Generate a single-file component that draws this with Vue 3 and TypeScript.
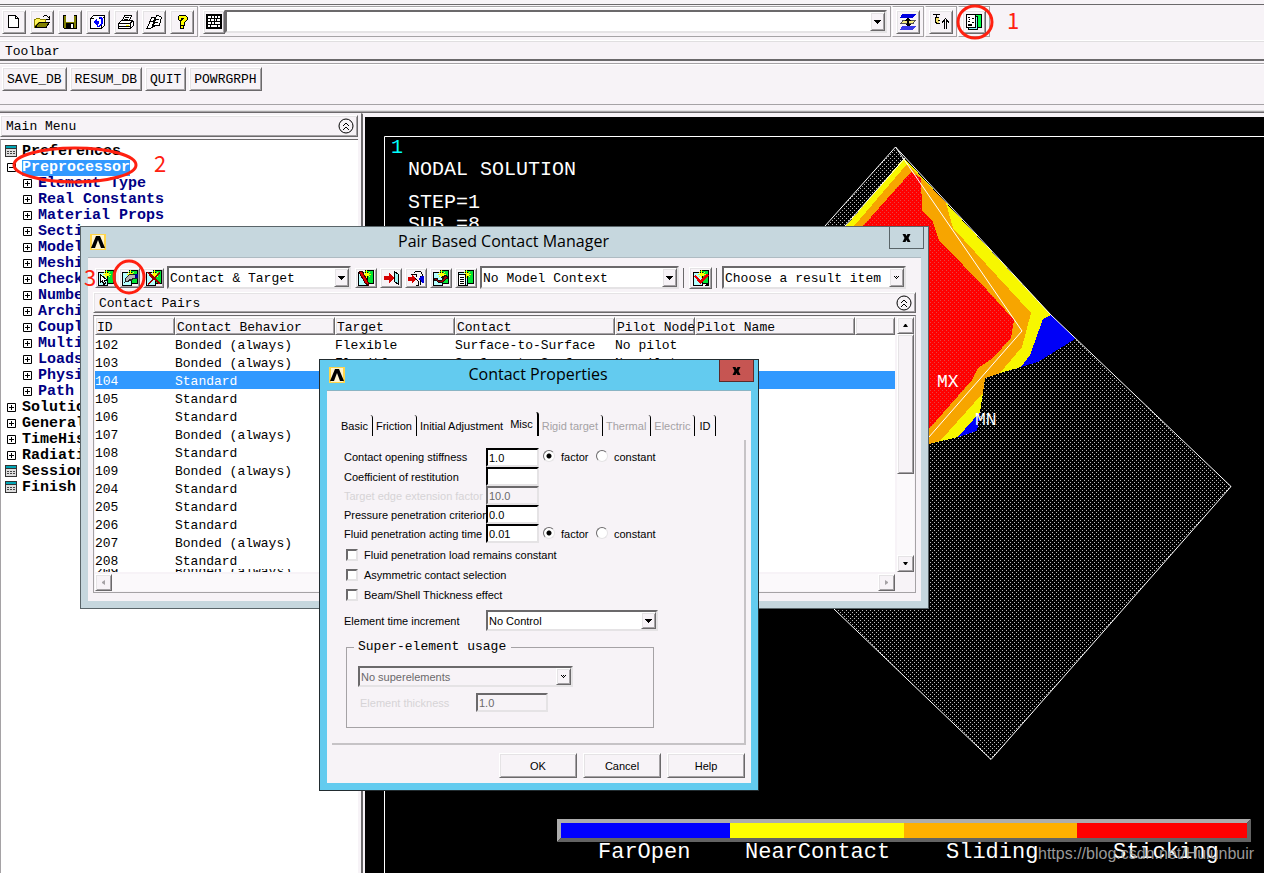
<script setup lang="ts">
import { ref } from 'vue'

type Shape = { d: string; f?: string; s?: string }

const pages: Shape[] = [
  { d: 'M7 0h9v14h-9z', f: '#000' },
  { d: 'M7 1h8v12h-8z', f: '#00e432' },
  { d: 'M0 2h10v14h-10z', f: '#000' },
  { d: 'M1 3h8v12h-8z', f: '#b5ffff' },
]
const spark: Shape = { d: 'M8.5 0v8M5 4.5h8M6 2l6 5M12 2l-6 5', s: '#ffff00' }

const icons: Record<string, Shape[]> = {
  new: [
    { d: 'M2.5 1.5h7l3 3v9h-10z', f: '#fff', s: '#000' },
    { d: 'M9.5 1.5v3h3', s: '#000' },
  ],
  open: [
    { d: 'M.5 13.5v-8h1l1-1h3l1 1h5v3h-7z', f: '#fff45a', s: '#8a8200' },
    { d: 'M1 14l4-6h11l-4 6z', f: '#808000' },
    { d: 'M1 13.5h11l3.5-5h-10l-4.5 5', s: '#000' },
    { d: 'M8.5 3.5l2-2h2l3 3M15.5 1.5v3.5h-3.5', s: '#000' },
  ],
  save: [
    { d: 'M1 1h14v14h-13l-1-1z', f: '#000' },
    { d: 'M2 2h2v6h8v-6h2v12h-12z', f: '#808000' },
    { d: 'M4 1h8v7h-8z', f: '#f7f3f7' },
    { d: 'M4 9h8v6h-8z', f: '#000' },
    { d: 'M9 10h2v4h-2z', f: '#fff' },
  ],
  restore: [
    { d: 'M.5 4.5l3-3h11v10l-3 3h-11z', f: '#fff', s: '#000' },
    { d: 'M.5 4.5h3M11.5 14.5v-9l3-3M9 4.5h2', s: '#000' },
    { d: 'M3 8l4-4v3h1c2 0 2 2 0 5h-2c5 0 6-3 5-6s-2-3-4-3h4c2 1 3 3 2 6s-3 4-6 4c2-2 2-3 1-3v2z', f: '#0000ff' },
  ],
  print: [
    { d: 'M4.5 6.5l2-5h7l-2 5z', f: '#fff', s: '#000' },
    { d: 'M7 3.5h4M6 5.5h4', s: '#000' },
    { d: 'M.5 9.5l3-3h11l1 1v4l-3 3h-12z', f: '#fff', s: '#000' },
    { d: 'M1 9.5h11l3-3M12.5 10v4M1 12.5h11', s: '#000' },
    { d: 'M8 11h3v1h-3z', f: '#ffff00' },
  ],
  report: [
    { d: 'M2.5 11.5l3-8h3l-2 9-2 2h-4l2-3z', f: '#fff', s: '#000' },
    { d: 'M7.5 11.5l3-10h2l3 2-2 8z', f: '#fff', s: '#000' },
    { d: 'M10 5.5h3M9 8.5h3M4 7.5h3M6 13.5l4-2', s: '#000' },
  ],
  help: [
    { d: 'M4 5V3l2-2h5l2 2v3l-3 3v2H6V8l3-3V4H7v2H5z', f: '#ffff00', s: '#000' },
    { d: 'M6.5 11.5h3v3h-3z', f: '#ffff00', s: '#000' },
  ],
  command: [
    { d: 'M0 0h16v15h-16z', f: '#000' },
    { d: 'M2 2h3v2h-3zM6 2h2v2h-2zM9 2h2v2h-2zM12 2h2v2h-2zM2 5h2v2h-2zM5 5h3v2h-3zM9 5h1v2h-1zM11 5h3v2h-3zM2 8h3v2h-3zM6 8h2v2h-2zM9 8h5v2h-5zM2 11h2v2h-2zM5 11h6v2h-6zM12 11h2v2h-2z', f: '#fff' },
  ],
  layers: [
    { d: 'M2 0h14l-3 4h-13z', f: '#0000e0' },
    { d: 'M3 6.5h12l-2 3h-12z', f: '#f7ee7a', s: '#555' },
    { d: 'M2 12h14l-3 4h-13z', f: '#3838e8' },
    { d: 'M7 4h2l2 3h-2v3h2l-2 2h-2l-2-2h2v-3h-2z', f: '#000' },
  ],
  raise: [
    { d: 'M3 4h3v5h-3z', f: '#f3e26b' },
    { d: 'M0 .5h7M3.5 1v2M6 3.5h-3l-1 1v3l2 2h3M5 6.5h2', s: '#000' },
    { d: 'M11.5 15v-9M13.5 15v-9M9 8.5l3.5-4 3.5 4', s: '#000' },
  ],
  pair: [
    { d: 'M9 0h7v14h-7z', f: '#000' },
    { d: 'M10 1h5v12h-5z', f: '#00ff42' },
    { d: 'M2 2h10v14h-10z', f: '#000' },
    { d: 'M3 3h8v12h-8z', f: '#8cf3ff' },
    { d: 'M.5 .5h9v13h-9z', f: '#fff', s: '#000' },
    { d: 'M2 3.5h2M3 5.5h1M6 4.5h2M2 7.5h2M6 8.5h2M2 10.5h4M2 11.5h4', s: '#000' },
  ],
  pick: [...pages, spark, { d: 'M2.5 4.5v8l2-2 1 4 2-1-1-3h3z', f: '#fff', s: '#000' }],
  props: [...pages, spark, { d: 'M4 8l4-4h7v4h-4l-2 3-1-2-2 3-1-1-2 1z', f: '#b5b5b5', s: '#222' }, { d: 'M13 4h3v4h-3z', f: '#000090' }],
  remove: [...pages, spark, { d: 'M1 2l3 1 4 4 5-5 1 1-5 5 5 5-1 1-5-4-6 5-1-1 5-5z', f: '#9c0000' }],
  draw: [...pages, spark, { d: 'M1 2l3-1 6 11v3l-3-2z', f: '#e00000', s: '#400' }],
  target: [
    { d: 'M11.5 1.5l4 3v10l-4-3z', f: '#9cf3f3', s: '#000' },
    { d: 'M1 6h5v-3l6 5-6 5v-3h-5z', f: '#d60000' },
  ],
  flip: [
    { d: 'M5.5 3.5l2-2h5l2 3v3M3 4.5h5v2M12 6l2.5 2 2-3', s: '#000' },
    { d: 'M0 7h4v-2l4 4-4 4v-2h-4z', f: '#d60000' },
    { d: 'M16 6h-2l-4 3 4 4h2z', f: '#0000e0' },
    { d: 'M7.5 8.5l3 3v4h-3M12.5 10v5', s: '#000' },
  ],
  swap: [...pages, spark, { d: 'M1 8h3l1 2h4l2-3h-1l3-2 2 3-2 1-3 3h-5l-2-2h-2z', f: '#a00000', s: '#111' }],
  list: [...pages, spark, { d: 'M.5 4.5h7v11h-7zM2 7.5h4M2 9.5h4M2 11.5h4M2 13.5h4', f: '#fff', s: '#000' }],
  check: [...pages, spark, { d: 'M1 6l2-1 4 5 7-6 2 1-9 9z', f: '#e80000' }, { d: 'M11 16l5-4v4z', f: '#000' }],
}

const fileTools = [
  ['new', 'New'], ['open', 'Open'], ['save', 'Save'], ['restore', 'Restore'],
  ['print', 'Print'], ['report', 'Report'], ['help', 'Help'],
]
const sideTools = [['layers', 'Raise hidden'], ['raise', 'Reset picking'], ['pair', 'Contact Manager']]
const shortcuts = ['SAVE_DB', 'RESUM_DB', 'QUIT', 'POWRGRPH']

const tree = [
  { t: 'Preferences', l: 0, k: 'form' },
  { t: 'Preprocessor', l: 0, k: 'minus', on: true },
  ...['Element Type', 'Real Constants', 'Material Props', 'Sections', 'Modeling', 'Meshing',
    'Checking Ctrls', 'Numbering Ctrls', 'Archive Model', 'Coupling / Ceqn', 'Multi-field',
    'Loads', 'Physics', 'Path Operations'].map((t) => ({ t, l: 1, k: 'plus', on: false })),
  ...['Solution', 'General Postproc', 'TimeHist Postpro', 'Radiation Opt'].map((t) => ({ t, l: 0, k: 'plus', on: false })),
  { t: 'Session Editor', l: 0, k: 'form' },
  { t: 'Finish', l: 0, k: 'form' },
]

const bonded = ['102', '103', '107', '109', '207', '209']
const ids = ['102', '103', '104', '105', '106', '107', '108', '109', '204', '205', '206', '207', '208', '209']
const rows = ids.map((id) => ({
  id,
  behavior: bonded.includes(id) ? 'Bonded (always)' : 'Standard',
}))
const headers = ['ID', 'Contact Behavior', 'Target', 'Contact', 'Pilot Node', 'Pilot Name', '']
const selected = ref('104')

const tabs = [
  { t: 'Basic' }, { t: 'Friction' }, { t: 'Initial Adjustment' }, { t: 'Misc', on: true },
  { t: 'Rigid target', off: true }, { t: 'Thermal', off: true }, { t: 'Electric', off: true }, { t: 'ID' },
]
const fields = ref([
  { id: 'stiff', t: 'Contact opening stiffness', v: '1.0', mode: 'factor' },
  { id: 'rest', t: 'Coefficient of restitution', v: '' },
  { id: 'edge', t: 'Target edge extension factor', v: '10.0', off: true },
  { id: 'pres', t: 'Pressure penetration criterion', v: '0.0' },
  { id: 'fluid', t: 'Fluid penetration acting time', v: '0.01', mode: 'factor' },
] as { id: string; t: string; v: string; off?: boolean; mode?: string }[])
const checks = ['Fluid penetration load remains constant', 'Asymmetric contact selection', 'Beam/Shell Thickness effect']

const legend = [
  { t: 'FarOpen', c: '#0000ff', x: 561, w: 169, tx: 598 },
  { t: 'NearContact', c: '#ffff00', x: 730, w: 174, tx: 745 },
  { t: 'Sliding', c: '#ffb000', x: 904, w: 173, tx: 946 },
  { t: 'Sticking', c: '#ff0000', x: 1077, w: 170, tx: 1113 },
]
</script>

<template>
  <div class="desk">
    <header class="bars">
      <div class="row tools">
        <div class="group files">
          <button v-for="[k, n] in fileTools" :key="k" class="tool" :aria-label="n">
            <svg class="ico" viewBox="0 0 16 16"><path v-for="(p, i) in icons[k]" :key="i" :d="p.d" :fill="p.f || 'none'" :stroke="p.s || 'none'" /></svg>
          </button>
        </div>
        <div class="group command">
          <button class="tool cmd" aria-label="Command window">
            <svg class="ico" viewBox="0 0 16 16"><path v-for="(p, i) in icons.command" :key="i" :d="p.d" :fill="p.f || 'none'" :stroke="p.s || 'none'" /></svg>
          </button>
          <div class="combo entry">
            <input type="text" aria-label="Command" />
            <button class="drop" aria-label="Command history"><svg viewBox="0 0 7 4"><path d="M0 0h7l-3 4h-1z" /></svg></button>
          </div>
        </div>
        <div v-for="[k, n] in sideTools" :key="k" class="group single">
          <button class="tool" :aria-label="n">
            <svg class="ico" viewBox="0 0 16 16"><path v-for="(p, i) in icons[k]" :key="i" :d="p.d" :fill="p.f || 'none'" :stroke="p.s || 'none'" /></svg>
          </button>
        </div>
      </div>
      <div class="caption">Toolbar</div>
      <div class="row shortcuts">
        <button v-for="s in shortcuts" :key="s" class="push">{{ s }}</button>
      </div>
    </header>

    <main class="work">
      <nav class="side">
        <div class="panel-head menu-head">
          <span>Main Menu</span>
          <button class="fold" aria-label="Collapse menu">
            <svg viewBox="0 0 16 16"><circle cx="8" cy="8" r="7" /><path d="M5 8l3-3 3 3M5 12l3-3 3 3" /></svg>
          </button>
        </div>
        <ul class="tree">
          <li v-for="n in tree" :key="n.t" :class="{ deep: n.l, plain: !n.l, on: n.on }">
            <svg v-if="n.k === 'form'" class="form" viewBox="0 0 12 12">
              <path d="M0 0h12v12h-12z" fill="#333" /><path d="M1 1h10v2h-10z" fill="#00a5b5" />
              <path d="M1 4h10v7h-10z" fill="#ddd" /><path d="M2 6.5h8M2 8.5h8" stroke="#444" stroke-dasharray="2 1" />
            </svg>
            <svg v-else class="node" viewBox="0 0 9 9">
              <path d="M.5.5h8v8h-8zM2 4.5h5" /><path v-if="n.k === 'plus'" d="M4.5 2v5" />
            </svg>
            <a href="#">{{ n.t }}</a>
          </li>
        </ul>
      </nav>

      <section class="plot">
        <svg viewBox="365 117 899 756" preserveAspectRatio="xMinYMin meet">
          <defs>
            <pattern id="mesh" width="4" height="4" patternUnits="userSpaceOnUse"><path d="M0 0h1v1h-1zM2 2h1v1h-1z" fill="#bdbdbd" /></pattern>
          </defs>
          <path class="line" d="M1264 136.5H384.5V873" />
          <g shape-rendering="crispEdges">
            <path d="M895 147L905 158L845 226H825zM1075 339L1231 486L991 760L834 609L929 444L985 378L1038 362z" fill="url(#mesh)" />
            <path d="M904 158L1051 315L1043 319L1030 355L1021 367L1000 373L985 378L983 393L980 412L958 437L929 444V226H846z" fill="#f7f700" />
            <path d="M907 164L946 203L953 228L1031 313L1022 347L1000 373L985 378L983 393L940 441L929 444V226H854z" fill="#f7a500" />
            <path d="M911 172L921 178L922 210L933 222L939 240L987 290L1014 320L1011 338L993 358L978 368L972 380L929 429V226H863z" fill="#f00" />
            <path d="M911 172L921 178L922 210L933 222L939 240L987 290L1014 320L1011 338L993 358L978 368L972 380L929 429V226H863z" fill="url(#mesh)" opacity=".35" />
            <path d="M1051 315L1075 339L1038 362L1021 367L1030 355L1043 319zM980 412L977 431L958 437z" fill="#0000f7" />
          </g>
          <path class="line" d="M825 226L895.5 147L1051 315L1231 486.5L991 759.5L834 609M905 158L845 226M895.5 147L1022 331L929 437" />
          <text class="t20 cyan" x="391" y="153">1</text>
          <text class="t20" x="408" y="175">NODAL SOLUTION</text>
          <text class="t20" x="408" y="208">STEP=1</text>
          <text class="t20" x="408" y="230">SUB =8</text>
          <text class="t18" x="937" y="387">MX</text>
          <text class="t18" x="975" y="425">MN</text>
          <path d="M557 819H1251L1247 823H561V838L557 842z" fill="#adadad" />
          <path d="M1251 819V842H557L561 838H1247V823z" fill="#636363" />
          <template v-for="s in legend" :key="s.t">
            <rect :x="s.x" y="823" :width="s.w" height="15" :fill="s.c" />
            <text class="t22" :x="s.tx" y="858">{{ s.t }}</text>
          </template>
          <text class="mark" x="1038" y="859">https://blog.csdn.net/Hulunbuir</text>
        </svg>
      </section>
    </main>

    <section class="window manager" aria-label="Pair Based Contact Manager">
      <div class="title">
        <svg class="logo" viewBox="0 0 16 16"><path d="M0 0h16v16h-16z" fill="#ffd54a" /><path d="M2 1h12v14h-12z" fill="#fff4cf" /><path d="M1 14L6 2h4l5 12h-4L8 6l-3 8z" fill="#000" /></svg>
        <h2>Pair Based Contact Manager</h2>
        <button class="close" aria-label="Close"><svg viewBox="0 0 8 8"><path d="M0 0h3l1 2 1-2h3l-2 4 2 4h-3l-1-2-1 2h-3l2-4z" /></svg></button>
      </div>
      <div class="body">
        <div class="row ctools">
          <button v-for="k in ['pick', 'props', 'remove']" :key="k" class="tool small" :aria-label="k">
            <svg class="ico" viewBox="0 0 16 16"><path v-for="(p, i) in icons[k]" :key="i" :d="p.d" :fill="p.f || 'none'" :stroke="p.s || 'none'" /></svg>
          </button>
          <div class="combo scope"><select aria-label="Show"><option>Contact &amp; Target</option></select><span class="drop"><svg viewBox="0 0 7 4"><path d="M0 0h7l-3 4h-1z" /></svg></span></div>
          <button v-for="k in ['draw', 'target', 'flip', 'swap', 'list']" :key="k" class="tool small mid" :aria-label="k">
            <svg class="ico" viewBox="0 0 16 16"><path v-for="(p, i) in icons[k]" :key="i" :d="p.d" :fill="p.f || 'none'" :stroke="p.s || 'none'" /></svg>
          </button>
          <div class="combo context"><select aria-label="Model context"><option>No Model Context</option></select><span class="drop"><svg viewBox="0 0 7 4"><path d="M0 0h7l-3 4h-1z" /></svg></span></div>
          <i class="sep"></i>
          <button class="tool small wide" aria-label="check"><svg class="ico" viewBox="0 0 16 16"><path v-for="(p, i) in icons.check" :key="i" :d="p.d" :fill="p.f || 'none'" :stroke="p.s || 'none'" /></svg></button>
          <i class="sep"></i>
          <div class="combo result"><select aria-label="Result item"><option>Choose a result item</option></select><span class="drop dim"><svg viewBox="0 0 5 4"><path d="M0 0h1v1h-1zM2 0h1v1h-1zM4 0h1v1h-1zM1 1h1v1h-1zM3 1h1v1h-1zM2 2h1v1h-1z" /></svg></span></div>
        </div>
        <div class="panel-head pairs-head">
          <span>Contact Pairs</span>
          <button class="fold" aria-label="Collapse pairs">
            <svg viewBox="0 0 16 16"><circle cx="8" cy="8" r="7" /><path d="M5 8l3-3 3 3M5 12l3-3 3 3" /></svg>
          </button>
        </div>
        <div class="grid">
          <div class="view">
            <table>
              <colgroup><col class="c1" /><col class="c2" /><col class="c3" /><col class="c2" /><col class="c1" /><col class="c2" /><col /></colgroup>
              <thead><tr><th v-for="h in headers" :key="h" scope="col"><div>{{ h }}</div></th></tr></thead>
              <tbody>
                <tr v-for="r in rows" :key="r.id" :class="{ sel: r.id === selected, cut: r.id === '209' }" @click="selected = r.id">
                  <td><div>{{ r.id }}</div></td><td><div>{{ r.behavior }}</div></td><td><div>Flexible</div></td>
                  <td><div>Surface-to-Surface</div></td><td colspan="3"><div>{{ Number(r.id) < 104 ? 'No pilot' : '' }}</div></td>
                </tr>
              </tbody>
            </table>
          </div>
          <div class="vbar">
            <button class="arrow" aria-label="Scroll up"><svg viewBox="0 0 5 3"><path d="M0 3h5l-2-3h-1z" /></svg></button>
            <div class="thumb"></div><div class="track"></div>
            <button class="arrow" aria-label="Scroll down"><svg viewBox="0 0 5 3"><path d="M0 0h5l-2 3h-1z" /></svg></button>
          </div>
          <div class="hbar">
            <button class="arrow" aria-label="Scroll left"><svg viewBox="0 0 3 5"><path d="M3 0v5l-3-2v-1z" /></svg></button>
            <div class="track"></div>
            <button class="arrow" aria-label="Scroll right"><svg viewBox="0 0 3 5"><path d="M0 0v5l3-2v-1z" /></svg></button>
          </div>
        </div>
      </div>
    </section>

    <section class="window props" aria-label="Contact Properties">
      <div class="title">
        <svg class="logo" viewBox="0 0 16 16"><path d="M0 0h16v16h-16z" fill="#ffd54a" /><path d="M2 1h12v14h-12z" fill="#fff4cf" /><path d="M1 14L6 2h4l5 12h-4L8 6l-3 8z" fill="#000" /></svg>
        <h2>Contact Properties</h2>
        <button class="close" aria-label="Close"><svg viewBox="0 0 8 8"><path d="M0 0h3l1 2 1-2h3l-2 4 2 4h-3l-1-2-1 2h-3l2-4z" /></svg></button>
      </div>
      <div class="body">
        <div class="tabs" role="tablist">
          <button v-for="t in tabs" :key="t.t" role="tab" :aria-selected="!!t.on" :disabled="t.off" :class="{ on: t.on }">{{ t.t }}</button>
        </div>
        <div class="page">
          <div v-for="f in fields" :key="f.id" class="field">
            <label :for="f.id" :class="{ off: f.off }">{{ f.t }}</label>
            <input :id="f.id" v-model="f.v" type="text" :disabled="f.off" />
            <template v-if="f.mode">
              <label v-for="m in ['factor', 'constant']" :key="m" class="radio"><input v-model="f.mode" type="radio" :name="f.id" :value="m" />{{ m }}</label>
            </template>
          </div>
          <div class="checks">
            <label v-for="c in checks" :key="c" class="check"><input type="checkbox" />{{ c }}</label>
          </div>
          <div class="field time">
            <label for="inc">Element time increment</label>
            <div class="combo ctl"><select id="inc"><option>No Control</option></select><span class="drop"><svg viewBox="0 0 7 4"><path d="M0 0h7l-3 4h-1z" /></svg></span></div>
          </div>
          <fieldset>
            <legend>Super-element usage</legend>
            <div class="combo super"><select disabled aria-label="Super-element usage"><option>No superelements</option></select><span class="drop dim"><svg viewBox="0 0 5 4"><path d="M0 0h1v1h-1zM2 0h1v1h-1zM4 0h1v1h-1zM1 1h1v1h-1zM3 1h1v1h-1zM2 2h1v1h-1z" /></svg></span></div>
            <div class="field thick"><label for="thick" class="off">Element thickness</label><input id="thick" type="text" value="1.0" disabled /></div>
          </fieldset>
        </div>
        <div class="actions"><button>OK</button><button>Cancel</button><button>Help</button></div>
      </div>
    </section>

    <svg class="notes" aria-hidden="true">
      <ellipse cx="975" cy="22" rx="17" ry="16" /><text x="1007" y="29">1</text>
      <ellipse cx="75" cy="165" rx="61" ry="17" /><text x="154" y="172">2</text>
      <ellipse cx="129" cy="277" rx="15" ry="16" /><text x="84" y="286">3</text>
    </svg>
  </div>
</template>

<style>
body { margin: 0; }
</style>

<style scoped>
* { box-sizing: border-box; }
.desk {
  position: relative; display: flex; flex-direction: column; height: 100vh; overflow: hidden;
  background: #f7f3f7; color: #000; font: 13px/16px "Liberation Mono", monospace;
}
button, input, select { font: inherit; color: inherit; margin: 0; padding: 0; border-radius: 0; }
svg { display: block; }
.row { display: flex; align-items: center; }
.bars { border-bottom: 1px solid #6b696b; box-shadow: inset 0 -1px #a5a2a5, inset 0 -2px #e0dfe0; height: 113px; flex: none; }
.tools { margin-top: 4px; border-top: 1px solid #6b696b; padding: 1px 0 3px; gap: 1px; }
.group { display: flex; align-items: center; height: 31px; border: 1px solid #a5a2a5; border-left-color: #fff; box-shadow: inset 0 1px #fff; padding: 0 3px; flex: none; }
.files { gap: 4px; padding: 0 3px 0 2px; border-left: 0; }
.command { flex: 0 1 692px; }
.tool, .push, .arrow, .drop, .actions button {
  display: flex; align-items: center; justify-content: center; background: #f7f3f7;
  border: 1px solid; border-color: #fff #6b696b #6b696b #fff; box-shadow: inset 1px 1px #e5e3e5, inset -1px -1px #a5a2a5;
}
.tool { width: 24px; height: 24px; flex: none; }
.cmd { width: 22px; }
.ico { width: 16px; height: 16px; flex: none; shape-rendering: crispEdges; }
.combo { position: relative; display: flex; background: #fff; border: 2px solid; border-color: #6b696b #e5e3e5 #e5e3e5 #6b696b; height: 23px; }
.combo select, .combo input { appearance: none; border: 0; background: transparent; flex: 1; min-width: 0; width: 100%; outline: 0; opacity: 1; }
.combo .drop { position: absolute; right: 0; top: 0; bottom: 0; width: 15px; pointer-events: none; }
.entry { flex: 1; }
.drop svg { width: 7px; height: 4px; shape-rendering: crispEdges; }
.drop.dim svg { width: 5px; }
.caption { border-top: 1px solid #fff; border-bottom: 2px solid #6b696b; box-shadow: inset 0 1px #e0dfe0; height: 21px; padding: 3px 5px 0; }
.shortcuts { margin-top: 2px; height: 42px; border-top: 1px solid #a5a2a5; border-bottom: 1px solid #a5a2a5; box-shadow: inset 0 1px #fff; gap: 3px; padding: 3px 2px 0; align-items: flex-start; }
.push { height: 24px; padding: 2px 4px 0; }

.work { flex: 1; display: flex; min-height: 0; }
.side { width: 361px; flex: none; display: flex; flex-direction: column; padding: 2px 3px 0 0; }
.panel-head { display: flex; align-items: center; justify-content: space-between; border: 1px solid; border-color: #fff #6b696b #6b696b #fff; box-shadow: inset 1px 1px #e5e3e5, inset -1px -1px #a5a2a5; }
.menu-head { height: 22px; padding: 0 3px 0 5px; }
.panel-head span { padding-top: 2px; }
.fold { border: 0; background: none; width: 16px; height: 16px; }
.fold svg { width: 16px; height: 16px; fill: none; stroke: #000; }
.tree { flex: 1; margin: 2px 0 0; padding: 4px; list-style: none; background: #fff; border-left: 1px solid #a5a2a5; border-top: 1px solid #6b696b; font-size: 15px; font-weight: bold; }
.tree li { display: flex; align-items: center; height: 16px; }
.tree a { color: #000; text-decoration: none; line-height: 16px; white-space: nowrap; }
.tree .deep { padding-left: 17px; }
.tree .deep a { color: #000084; }
.tree .on a { background: #3199ff; color: #fff; }
.node { width: 9px; height: 9px; margin: 0 6px 2px 1px; fill: #fff; stroke: #000; flex: none; }
.plain .node { margin-left: 2px; }
.form { width: 12px; height: 12px; margin: 0 5px 2px 0; flex: none; }
.plot { flex: 1; min-width: 0; border-left: 2px solid #6b696b; border-top: 1px solid #f7f3f7; padding: 3px 0 0 2px; background: #f7f3f7; }
.plot svg { width: 100%; height: 100%; background: #000; overflow: hidden; }
.line { fill: none; stroke: #fff; stroke-width: 1; }
.plot text { fill: #fff; }
.plot .cyan { fill: #0ff; }
.t18 { font-size: 18px; }
.t20 { font-size: 20px; }
.t22 { font-size: 22px; }
.plot .mark { font: 16px "Liberation Sans", sans-serif; fill: #aaa; opacity: .9; }

.window { position: absolute; display: flex; flex-direction: column; border: 1px solid #5a6569; padding: 0 7px 7px; }
.title { display: flex; align-items: center; height: 30px; }
.title h2 { flex: 1; margin: 0; padding-left: 12px; text-align: center; font: 16px/28px "Open Sans", sans-serif; height: 30px; }
.logo { width: 16px; height: 16px; margin-left: 2px; }
.close { width: 35px; height: 22px; align-self: flex-start; margin-right: -3px; border: 1px solid #5a6569; border-top: 0; background: #c6d7de; display: flex; align-items: center; justify-content: center; }
.close svg { width: 9px; height: 8px; }
.body { background: #f7f3f7; border-top: 1px solid #aebbc2; }
.manager { left: 80px; top: 226px; width: 849px; height: 383px; background: #c6d7de; }
.manager .body { flex: 1; min-height: 0; padding: 7px 5px 8px; display: flex; flex-direction: column; }
.ctools { height: 25px; gap: 3px; padding-left: 2px; }
.small { width: 21px; height: 20px; }
.mid { width: 22px; }
.wide { width: 23px; height: 22px; }
.scope { width: 184px; margin-right: 1px; }
.context { width: 199px; }
.result { width: 184px; }
.sep { width: 1px; height: 20px; background: #6b696b; margin: 0 2px 0 1px; }
.combo select { padding: 2px 0 0 1px; }
.pairs-head { height: 21px; margin-top: 2px; padding: 0 3px 0 5px; }
.grid { flex: 1; min-height: 0; margin-top: 2px; border: 1px solid #a5a2a5; border-top-color: #6b696b; padding: 1px; display: grid; grid-template: 1fr 17px / 1fr 17px; gap: 2px; }
.view { overflow: hidden; background: #fff; min-height: 0; }
table { width: 100%; table-layout: fixed; border-collapse: collapse; }
.c1 { width: 80px; }
.c2 { width: 160px; }
.c3 { width: 120px; }
th, td { padding: 0; font-weight: normal; text-align: left; white-space: nowrap; }
th { background: #f7f3f7; }
th div { height: 18px; line-height: 19px; padding-left: 1px; overflow: hidden; border: 1px solid; border-color: #fff #6b696b #6b696b #fff; box-shadow: inset 1px 1px #e5e3e5, inset -1px -1px #a5a2a5; }
td div { height: 18px; line-height: 22px; overflow: hidden; }
.sel { background: #3199ff; color: #fff; }
.cut div { height: 5px; line-height: 5px; }
.vbar { display: flex; flex-direction: column; }
.hbar { display: flex; }
.arrow { width: 17px; height: 17px; flex: none; }
.arrow svg { width: 5px; height: 3px; }
.hbar .arrow svg { width: 3px; height: 5px; fill: #a5a2a5; }
.thumb { flex: 0 0 55%; border: 1px solid; border-color: #fff #6b696b #6b696b #fff; box-shadow: inset 1px 1px #e5e3e5, inset -1px -1px #a5a2a5; }
.track { flex: 1; background: #fbf9fb; }

.props { left: 319px; top: 359px; width: 440px; background: #63cbef; border-color: #222c30; font: 11px/14px "Liberation Sans", Arial, sans-serif; }
.props .close { background: #c65552; border-color: #5a2a2a; }
.props .body { padding: 18px 5px 5px; border-color: #8ab4c4; }
.tabs { display: flex; align-items: flex-end; height: 27px; margin-bottom: 4px; padding-left: 6px; }
.tabs button { background: none; border: 0; border-right: 1px solid #000; border-top-right-radius: 3px; height: 21px; padding: 0 4px 0 3px; white-space: nowrap; }
.tabs button:nth-child(3) { border-right-color: transparent; padding-right: 2px; }
.tabs .on { height: 24px; padding: 0 4px; border-right-width: 2px; }
.tabs button:disabled { color: #a5a2a5; }
.tabs button:last-child { padding: 0 5px 0 4px; }
.page { border: solid #c6c3c6; border-width: 0 2px 2px 0; padding: 7px 0 15px 12px; }
.field { display: flex; align-items: center; height: 19px; }
.field:first-child { height: 20px; }
.field > label:first-child { width: 142px; flex: none; white-space: nowrap; }
.field > input { width: 53px; height: 19px; padding: 1px 1px 0; background: #fff; border: 2px solid; border-color: #000 #e5e3e5 #e5e3e5 #000; }
.field > input:disabled { background: #f7f3f7; color: #6b696b; border-color: #6b696b #e5e3e5 #e5e3e5 #6b696b; }
.field .off { color: #d6d3d6; }
.radio { display: flex; align-items: center; gap: 6px; padding-left: 4px; width: 53px; }
.radio input { appearance: none; width: 12px; height: 12px; border-radius: 50%; background: #fff; border: 1px solid; border-color: #6b696b #e5e3e5 #e5e3e5 #6b696b; margin-bottom: 2px; flex: none; }
.radio input:checked { background: radial-gradient(circle, #000 2px, #fff 3px); }
.checks { padding: 2px 0 0 2px; }
.check { display: flex; align-items: center; height: 20px; gap: 6px; }
.check input { appearance: none; width: 12px; height: 12px; background: #fff; border: 2px solid; border-color: #6b696b #e5e3e5 #e5e3e5 #6b696b; }
.field.time { height: 21px; margin-top: 5px; }
.props .combo { height: 21px; }
.props .combo select { padding-top: 1px; }
.ctl { width: 172px; }
fieldset { margin: 8px 0 0 2px; width: 308px; height: 89px; border: 1px solid #a5a2a5; padding: 11px 11px 0; }
legend { font: 13px/16px "Liberation Mono", monospace; padding: 0 5px 0 4px; margin-left: -4px; }
.super { width: 215px; background: #f7f3f7; }
.super select { color: #6b696b; }
.thick { margin-top: 6px; padding-left: 2px; }
.thick > label:first-child { width: 116px; }
.thick > input { width: 72px; }
.actions { display: flex; justify-content: flex-end; gap: 6px; padding: 8px 1px 0 0; }
.actions button { width: 78px; height: 25px; }
.notes { position: absolute; left: 0; top: 0; width: 100%; height: 100%; pointer-events: none; fill: none; stroke: #ff2010; stroke-width: 3; }
.notes text { fill: #ff2010; stroke: none; font: 22px "Noto Sans CJK SC", sans-serif; }
</style>
